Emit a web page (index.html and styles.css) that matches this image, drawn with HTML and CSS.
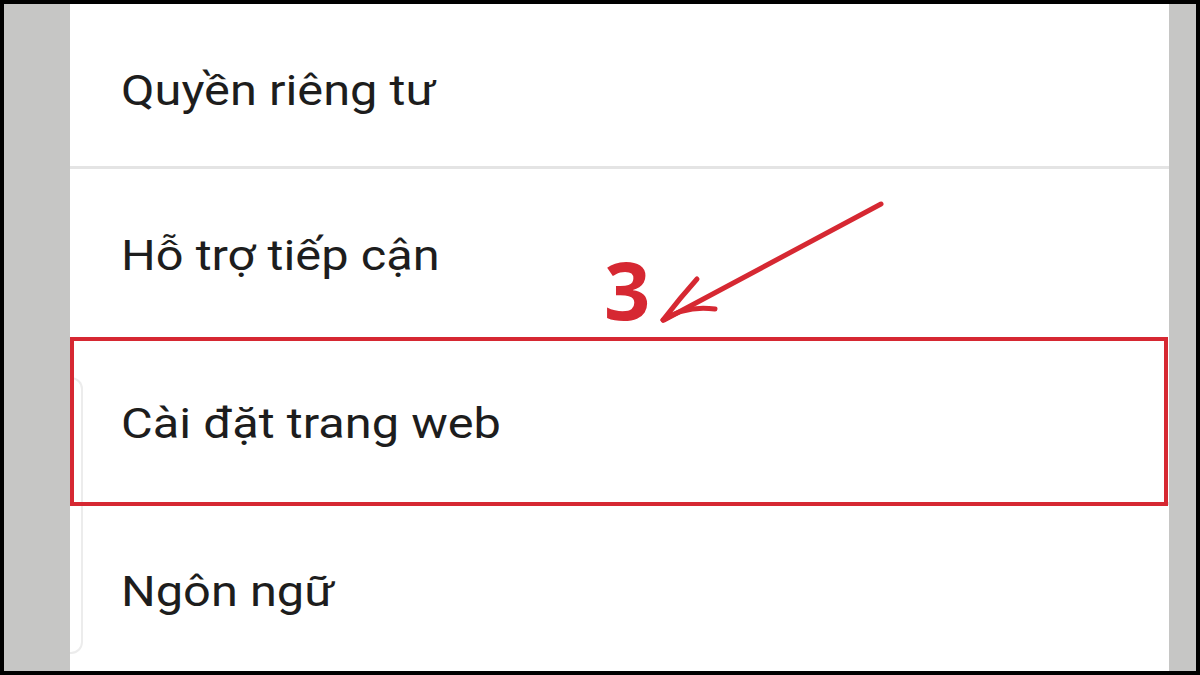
FILE: index.html
```html
<!DOCTYPE html>
<html lang="vi">
<head>
    <meta charset="UTF-8">
    <meta name="viewport" content="width=device-width, initial-scale=1.0">
    <title>Cài đặt</title>
    <link rel="stylesheet" href="styles.css">
</head>
<body>
    <div class="screen">
        <div class="side side-left"></div>

        <div class="panel">
            <!-- Edge of the card underneath -->
            <div class="card-edge"></div>

            <ul class="menu">
                <li class="menu-item first"><span class="label">Quyền riêng tư</span></li>
                <li class="menu-item before-selected"><span class="label">Hỗ trợ tiếp cận</span></li>
                <li class="menu-item"><span class="label">Cài đặt trang web</span></li>
                <li class="menu-item last"><span class="label">Ngôn ngữ</span></li>
            </ul>

            <!-- Step marker -->
            <div class="highlight"></div>
            <div class="step">3</div>
        </div>

        <div class="side side-right"></div>

        <svg class="arrow" viewBox="0 0 1200 675" width="1200" height="675">
            <g fill="none" stroke="#d62832" stroke-width="5" stroke-linecap="round" stroke-linejoin="round">
                <path d="M881 204 L664 320"/>
                <path d="M663 320 Q680 298 697 279"/>
                <path d="M663 320 Q686 305 715 309"/>
            </g>
        </svg>
    </div>
</body>
</html>
```

FILE: styles.css
```css
* {
    box-sizing: border-box;
}

body {
    margin: 0;
    background-color: #000;
    font-family: Roboto, "Noto Sans", Arial, sans-serif;
}

.screen {
    width: 1200px;
    height: 675px;
    border: 4px solid #000;
    display: flex;
    position: relative;
    overflow: hidden;
}

.side {
    background-color: #c6c6c5;
}

.side-left {
    width: 66px;
}

.side-right {
    width: 27px;
}

.panel {
    flex: 1;
    background-color: #fff;
    position: relative;
}

.menu {
    list-style: none;
    margin: 0;
    padding: 0;
}

.menu-item {
    height: 168px;
    line-height: 165px;
    padding: 4px 0 0 51px;
    font-size: 42px;
    color: #1d1d1d;
    border-bottom: 3px solid #e4e4e4;
}

/* the screen font is drawn a little wider than Roboto */
.label {
    display: inline-block;
    transform: scaleX(1.16);
    transform-origin: left center;
}

.menu-item.first {
    height: 165px;
    line-height: 156px;
    padding-top: 9px;
}

.menu-item.before-selected {
    border-bottom-color: transparent;
}

.menu-item.last {
    border-bottom: none;
}

.card-edge {
    position: absolute;
    left: 0;
    top: 373px;
    width: 13px;
    height: 277px;
    border: 2px solid #ececec;
    border-left: none;
    border-radius: 0 12px 12px 0;
}

/* Red frame around the selected row */
.highlight {
    position: absolute;
    left: 0;
    top: 333px;
    width: 1098px;
    height: 169px;
    border: 4px solid #d62832;
}

.step {
    position: absolute;
    left: 534px;
    top: 244px;
    font-family: "Open Sans", sans-serif;
    font-weight: 700;
    font-size: 81px;
    line-height: 1;
    color: #d62832;
}

.arrow {
    position: absolute;
    left: -4px;
    top: -4px;
    pointer-events: none;
}
```
